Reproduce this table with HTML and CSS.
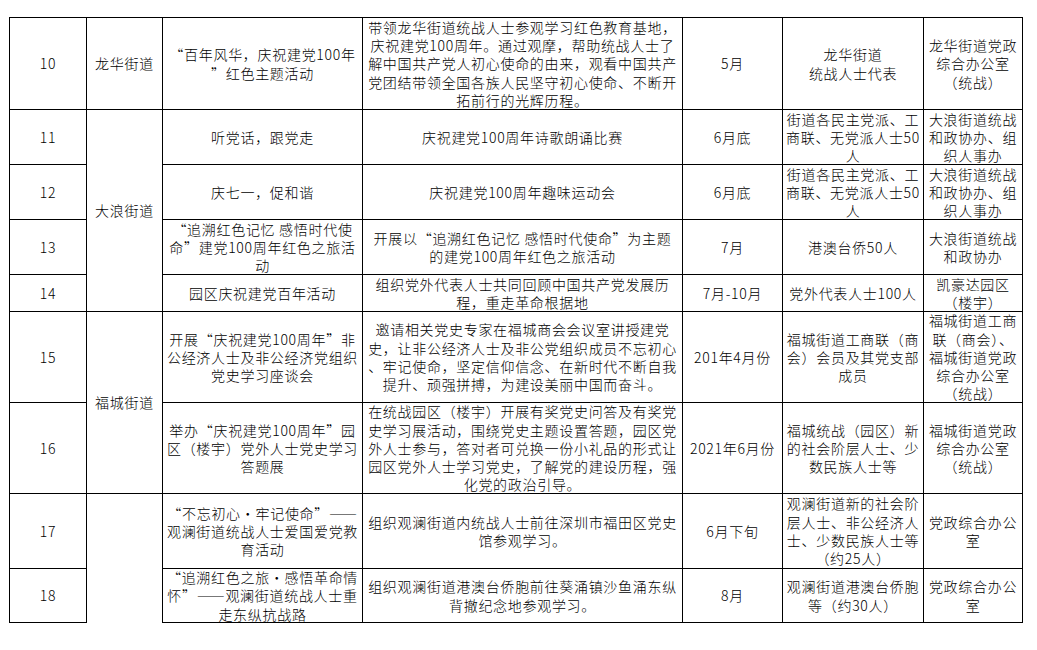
FILE: index.html
```html
<!DOCTYPE html>
<html lang="zh-CN">
<head>
<meta charset="utf-8">
<title>表格</title>
<link rel="stylesheet" href="styles.css">
</head>
<body>
<div class="table">
  <!-- 10 -->
  <div class="cell">10</div>
  <div class="cell">龙华街道</div>
  <div class="cell">“百年风华，庆祝建党100年<br>”红色主题活动</div>
  <div class="cell">带领龙华街道统战人士参观学习红色教育基地，<br>庆祝建党100周年。通过观摩，帮助统战人士了<br>解中国共产党人初心使命的由来，观看中国共产<br>党团结带领全国各族人民坚守初心使命、不断开<br>拓前行的光辉历程。</div>
  <div class="cell">5月</div>
  <div class="cell">龙华街道<br>统战人士代表</div>
  <div class="cell">龙华街道党政<br>综合办公室<br>（统战）</div>
  <!-- 11 -->
  <div class="cell">11</div>
  <div class="cell span4">大浪街道</div>
  <div class="cell">听党话，跟党走</div>
  <div class="cell">庆祝建党100周年诗歌朗诵比赛</div>
  <div class="cell">6月底</div>
  <div class="cell">街道各民主党派、工<br>商联、无党派人士50<br>人</div>
  <div class="cell">大浪街道统战<br>和政协办、组<br>织人事办</div>
  <!-- 12 -->
  <div class="cell">12</div>
  <div class="cell">庆七一，促和谐</div>
  <div class="cell">庆祝建党100周年趣味运动会</div>
  <div class="cell">6月底</div>
  <div class="cell">街道各民主党派、工<br>商联、无党派人士50<br>人</div>
  <div class="cell">大浪街道统战<br>和政协办、组<br>织人事办</div>
  <!-- 13 -->
  <div class="cell">13</div>
  <div class="cell">“追溯红色记忆 感悟时代使<br>命”建党100周年红色之旅活<br>动</div>
  <div class="cell">开展以“追溯红色记忆 感悟时代使命”为主题<br>的建党100周年红色之旅活动</div>
  <div class="cell">7月</div>
  <div class="cell">港澳台侨50人</div>
  <div class="cell">大浪街道统战<br>和政协办</div>
  <!-- 14 -->
  <div class="cell">14</div>
  <div class="cell">园区庆祝建党百年活动</div>
  <div class="cell">组织党外代表人士共同回顾中国共产党发展历<br>程，重走革命根据地</div>
  <div class="cell">7月-10月</div>
  <div class="cell">党外代表人士100人</div>
  <div class="cell">凯豪达园区<br>（楼宇）</div>
  <!-- 15 -->
  <div class="cell">15</div>
  <div class="cell span2">福城街道</div>
  <div class="cell">开展“庆祝建党100周年”非<br>公经济人士及非公经济党组织<br>党史学习座谈会</div>
  <div class="cell">邀请相关党史专家在福城商会会议室讲授建党<br>史，让非公经济人士及非公党组织成员不忘初心<br>、牢记使命，坚定信仰信念、在新时代不断自我<br>提升、顽强拼搏，为建设美丽中国而奋斗。</div>
  <div class="cell">201年4月份</div>
  <div class="cell">福城街道工商联（商<br>会）会员及其党支部<br>成员</div>
  <div class="cell">福城街道工商<br>联（商会）、<br>福城街道党政<br>综合办公室<br>（统战）</div>
  <!-- 16 -->
  <div class="cell">16</div>
  <div class="cell">举办“庆祝建党100周年”园<br>区（楼宇）党外人士党史学习<br>答题展</div>
  <div class="cell">在统战园区（楼宇）开展有奖党史问答及有奖党<br>史学习展活动，围绕党史主题设置答题，园区党<br>外人士参与，答对者可兑换一份小礼品的形式让<br>园区党外人士学习党史，了解党的建设历程，强<br>化党的政治引导。</div>
  <div class="cell">2021年6月份</div>
  <div class="cell">福城统战（园区）新<br>的社会阶层人士、少<br>数民族人士等</div>
  <div class="cell">福城街道党政<br>综合办公室<br>（统战）</div>
  <!-- 17 -->
  <div class="cell">17</div>
  <div class="cell span2 open-bottom"></div>
  <div class="cell">“不忘初心•牢记使命”——<br>观澜街道统战人士爱国爱党教<br>育活动</div>
  <div class="cell">组织观澜街道内统战人士前往深圳市福田区党史<br>馆参观学习。</div>
  <div class="cell">6月下旬</div>
  <div class="cell">观澜街道新的社会阶<br>层人士、非公经济人<br>士、少数民族人士等<br>（约25人）</div>
  <div class="cell">党政综合办公<br>室</div>
  <!-- 18 -->
  <div class="cell">18</div>
  <div class="cell">“追溯红色之旅•感悟革命情<br>怀”——观澜街道统战人士重<br>走东纵抗战路</div>
  <div class="cell">组织观澜街道港澳台侨胞前往葵涌镇沙鱼涌东纵<br>背撤纪念地参观学习。</div>
  <div class="cell">8月</div>
  <div class="cell">观澜街道港澳台侨胞<br>等（约30人）</div>
  <div class="cell">党政综合办公<br>室</div>
</div>
</body>
</html>
```

FILE: styles.css
```css
html, body {
  margin: 0;
  padding: 0;
  background: #fff;
}

body {
  padding: 17px 0 0 9px;
  font-family: "Noto Sans CJK SC", "Noto Sans", sans-serif;
  font-size: 14px;
  color: #000;
}

.table {
  display: grid;
  width: 1014px;
  box-sizing: border-box;
  grid-template-columns: 77px 76px 200px 320px 100px 141px 99px;
  grid-template-rows: 92px 55px 55px 55px 37px 91px 91px 75px 54px;
  border-left: 1px solid #000;
  border-top: 1px solid #000;
}

.cell {
  box-sizing: border-box;
  border-right: 1px solid #000;
  border-bottom: 1px solid #000;
  display: flex;
  align-items: center;
  justify-content: center;
  text-align: center;
  white-space: nowrap;
  line-height: 18.3px;
  letter-spacing: 0.7px;
  font-weight: 300;
}

.span4 {
  grid-row: span 4;
}

.span2 {
  grid-row: span 2;
}

.open-bottom {
  border-bottom: none;
}
```
